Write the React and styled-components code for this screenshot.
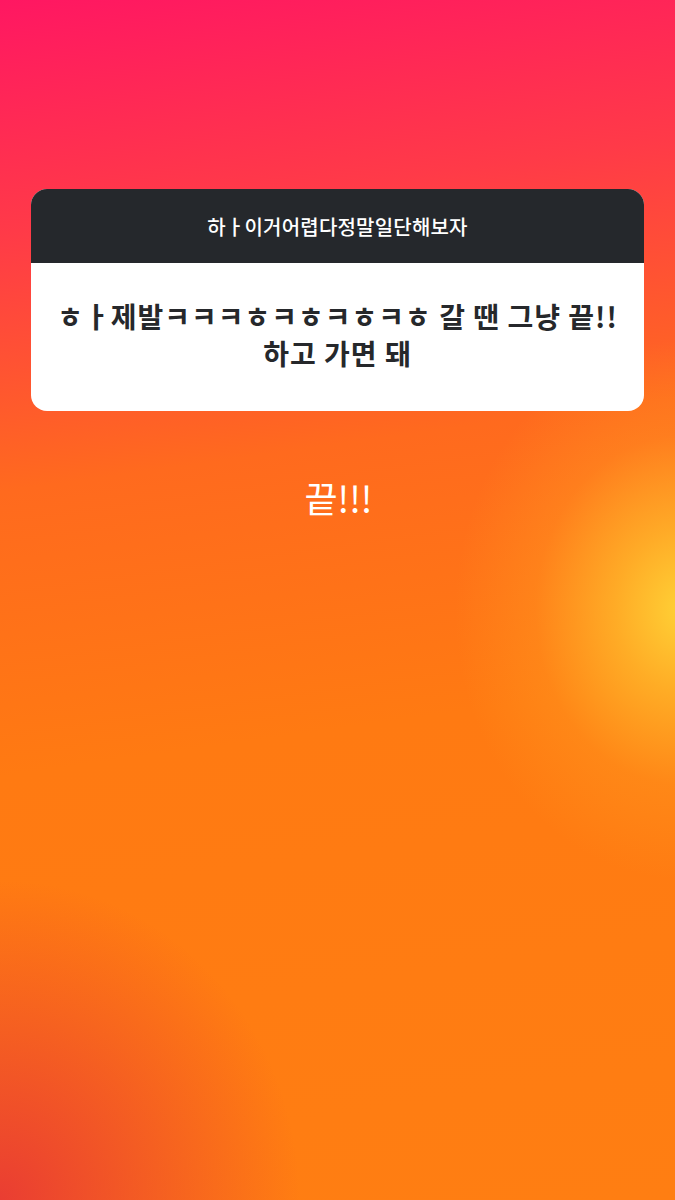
import styled, { createGlobalStyle } from "styled-components";

const GlobalStyle = createGlobalStyle`
  html, body {
    margin: 0;
    padding: 0;
  }
  body {
    font-family: "Noto Sans CJK KR", "Noto Sans", sans-serif;
  }
`;

const Story = styled.main`
  width: 675px;
  height: 1200px;
  box-sizing: border-box;
  padding: 189px 31px 0;
  display: flex;
  flex-direction: column;
  align-items: stretch;
  background:
    radial-gradient(ellipse 230px 270px at 685px 610px, rgba(255, 210, 54, 1) 0%, rgba(255, 190, 44, 0.75) 30%, rgba(255, 165, 34, 0.3) 65%, rgba(255, 150, 30, 0) 100%),
    radial-gradient(ellipse 300px 320px at 0px 1200px, rgba(230, 50, 56, 0.85) 0%, rgba(232, 52, 56, 0) 100%),
    linear-gradient(172deg, #ff1762 0%, #ff3a48 18%, #ff6a1e 38%, #ff7a12 60%, #ff7e12 100%);
`;

const Card = styled.section`
  border-radius: 16px;
  overflow: hidden;
  background: #ffffff;
`;

const CardHeader = styled.header`
  height: 74px;
  background: #25282c;
  color: #ffffff;
  display: flex;
  align-items: center;
  justify-content: center;
  font-size: 20px;
  font-weight: 500;
  letter-spacing: 0.2px;
`;

const Answer = styled.p`
  margin: 0;
  height: 148px;
  box-sizing: border-box;
  display: flex;
  align-items: center;
  justify-content: center;
  text-align: center;
  color: #26282b;
  font-size: 28px;
  font-weight: 700;
  line-height: 37px;
  letter-spacing: 1px;
  padding: 0 10px 4px;
`;

const Caption = styled.p`
  margin: 60px 0 0;
  text-align: center;
  color: #ffffff;
  font-size: 36px;
  font-weight: 400;
  line-height: 52px;
  padding-left: 2px;
`;

export default function App() {
  return (
    <>
      <GlobalStyle />
      <Story>
        <Card>
          <CardHeader>하ㅏ이거어렵다정말일단해보자</CardHeader>
          <Answer>
            ㅎㅏ제발ㅋㅋㅋㅎㅋㅎㅋㅎㅋㅎ 갈 땐 그냥 끝!!
            <br />
            하고 가면 돼
          </Answer>
        </Card>
        <Caption>끝!!!</Caption>
      </Story>
    </>
  );
}
